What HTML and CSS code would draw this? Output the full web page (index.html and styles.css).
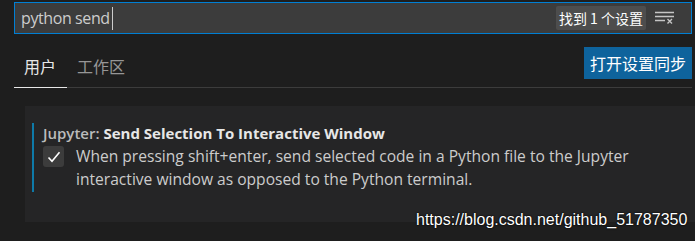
FILE: index.html
```html
<!DOCTYPE html>
<html>
<head>
<meta charset="utf-8">
<link rel="stylesheet" href="styles.css">
</head>
<body>
<div class="page">
  <div class="search">
    <span class="query">python send</span><span class="caret"></span>
    <span class="spacer"></span>
    <span class="badge">找到 1 个设置</span>
    <svg class="filter" width="20" height="14" viewBox="0 0 20 14">
      <path d="M0 1.5h19M0 5.5h19M0 9.5h10" stroke="#c5c5c5" stroke-width="1.3" fill="none"/>
      <path d="M12.5 8l4.5 4.5M17 8l-4.5 4.5" stroke="#c5c5c5" stroke-width="1.4" fill="none"/>
    </svg>
  </div>
  <div class="header">
    <div class="tabs">
      <span class="tab active">用户</span>
      <span class="tab">工作区</span>
    </div>
    <button class="sync">打开设置同步</button>
  </div>
  <div class="card">
    <div class="item">
      <div class="title"><span class="cat">Jupyter: </span><span class="name">Send Selection To Interactive Window</span></div>
      <div class="row">
        <span class="check">
          <svg width="20" height="20" viewBox="0 0 20 20"><path d="M4.5 10.5l3.5 3.8 7.5-9" stroke="#fff" stroke-width="1.6" fill="none"/></svg>
        </span>
        <div class="desc">When pressing shift+enter, send selected code in a Python file to the Jupyter interactive window as opposed to the Python terminal.</div>
      </div>
    </div>
  </div>
  <div class="watermark">https://blog.csdn.net/github_51787350</div>
</div>
</body>
</html>
```
FILE: styles.css
```css
html, body {
  margin: 0;
  padding: 0;
  background: #1e1e1e;
  width: 695px;
  height: 241px;
  overflow: hidden;
  font-family: "Open Sans", "Noto Sans CJK SC", sans-serif;
}
.page {
  position: relative;
  width: 695px;
  height: 241px;
}
.search {
  margin: 2px 3px 0 14px;
  height: 30px;
  border: 1px solid #007fd4;
  background: #3c3c3c;
  display: flex;
  align-items: center;
  padding-left: 6px;
  padding-right: 16px;
}
.query {
  color: #cccccc;
  font-size: 16px;
  letter-spacing: -0.4px;
}
.caret {
  width: 1px;
  height: 23px;
  background: #cccccc;
  margin-left: 2px;
}
.spacer { flex: 1; }
.badge {
  background: #4d4d4d;
  color: #ffffff;
  font-size: 14px;
  height: 24px;
  line-height: 24px;
  padding: 0 3px;
  border-radius: 2px;
  font-family: "Noto Sans CJK SC", sans-serif;
}
.filter {
  margin-left: 9px;
}
.header {
  display: flex;
  justify-content: space-between;
  margin: 0 3px 0 14px;
  border-bottom: 1px solid #3c3c3c;
  height: 53px;
}
.tabs {
  display: flex;
  align-items: flex-end;
}
.tab {
  font-family: "Noto Sans CJK SC", sans-serif;
  font-size: 16px;
  color: #969696;
  padding: 0 10px;
  height: 40px;
  line-height: 37px;
  box-sizing: border-box;
  margin-bottom: -1px;
}
.tab.active {
  color: #e7e7e7;
  border-bottom: 1px solid #e7e7e7;
  width: 53px;
  padding-right: 0;
}
.sync {
  margin-top: 13px;
  width: 108px;
  height: 32px;
  background: #0e639c;
  color: #ffffff;
  border: none;
  font-family: "Noto Sans CJK SC", sans-serif;
  font-size: 16px;
  padding: 0;
}
.card {
  margin: 18px 0 0 25px;
  height: 116px;
  background: #252526;
  padding-top: 18px;
  box-sizing: border-box;
}
.item {
  margin-left: 7px;
  border-left: 2px solid #0e7aa8;
  padding-left: 9px;
  height: 69px;
}
.title {
  font-size: 15px;
  line-height: 20px;
  margin-top: -1px;
}
.cat {
  color: #bbbbbb;
  font-weight: 600;
}
.name {
  color: #e7e7e7;
  font-weight: 700;
}
.row {
  display: flex;
  margin-top: 3px;
}
.check {
  width: 21px;
  height: 21px;
  background: #3c3c3c;
  border-radius: 3px;
  display: flex;
  align-items: center;
  justify-content: center;
  flex: none;
  margin-right: 12px;
}
.desc {
  color: #cccccc;
  font-size: 15.6px;
  line-height: 23px;
  margin-top: -1px;
  width: 570px;
}
.watermark {
  position: absolute;
  left: 416px;
  top: 209px;
  font-family: "Liberation Sans", Arial, sans-serif;
  font-size: 16px;
  color: #ffffff;
  text-shadow: 0 0 2px #000, 0 0 1px #000;
}
```
